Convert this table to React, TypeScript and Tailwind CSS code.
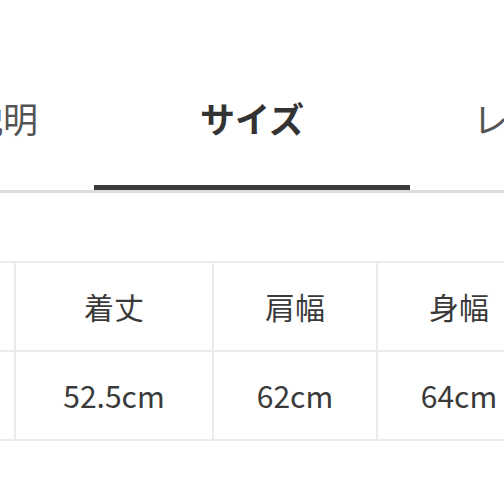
const font = { fontFamily: '"Noto Sans CJK JP", "Noto Sans", sans-serif' };

const headers = ["", "着丈", "肩幅", "身幅"];
const values = ["", "52.5cm", "62cm", "64cm"];
const widths = ["w-[100px]", "w-[198px]", "w-[164px]", "w-[164px]"];

export default function App() {
  return (
    <div className="w-[504px] h-[504px] overflow-hidden bg-white" style={font}>
      <div className="pt-[95px]">
        <div className="flex w-[504px] overflow-hidden">
          <div className="shrink-0 w-[200px] ml-[-106px] flex justify-end pr-[56px]">
            <span className="text-[35px] leading-[46px] text-[#555] whitespace-nowrap">商品説明</span>
          </div>
          <div className="shrink-0 w-[316px] flex justify-center">
            <span className="text-[35px] leading-[46px] font-bold text-[#333]">サイズ</span>
          </div>
          <div className="shrink-0 w-[200px] pl-[63px]">
            <span className="text-[35px] leading-[46px] text-[#555] whitespace-nowrap">レビュー</span>
          </div>
        </div>
        <div className="h-[49px]" />
        <div className="relative h-[3px] bg-[#dcdcdc]">
          <div className="absolute left-[94px] bottom-[3px] w-[316px] h-[5px] bg-[#3b3b3b]" />
        </div>
      </div>
      <div className="mt-[68px] w-[504px] overflow-hidden">
        <div className="ml-[-84px] w-max">
          {[headers, values].map((row, r) => (
            <div key={r} className={`flex border-[#ebebeb] border-b-2 ${r === 0 ? "border-t-2" : ""}`}>
              {row.map((cell, i) => (
                <div
                  key={i}
                  className={`${widths[i]} h-[87px] flex items-center justify-center border-r-2 border-[#ebebeb] text-[30px] text-[#3a3a3a]`}
                >
                  {cell}
                </div>
              ))}
            </div>
          ))}
        </div>
      </div>
    </div>
  );
}
